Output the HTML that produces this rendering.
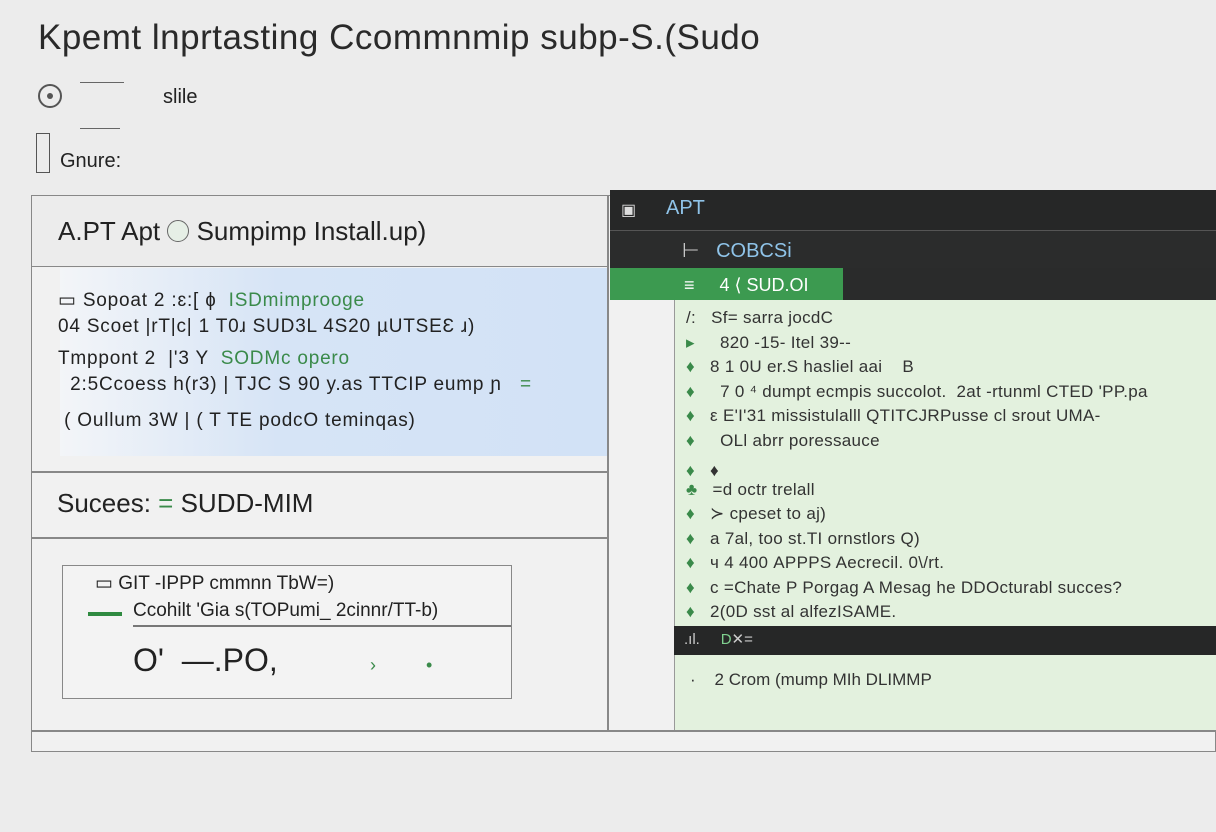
<!DOCTYPE html><html><head><style>
body{margin:0;width:1216px;height:832px;background:#ececec;font-family:"Liberation Sans",sans-serif;position:relative;overflow:hidden;color:#222}
.a{position:absolute;white-space:nowrap}
.g{color:#3a8a4a}
</style></head><body>
<div class="a" style="left:38px;top:18px;font-size:35px;color:#2a2a2a;letter-spacing:0.5px">Kpemt lnprtasting Ccommnmip subp-S.(Sudo</div>
<div class="a" style="left:38px;top:84px;width:24px;height:24px;border:2px solid #555;border-radius:50%;box-sizing:border-box"></div>
<div class="a" style="left:47px;top:93px;width:6px;height:6px;background:#555;border-radius:50%"></div>
<div class="a" style="left:80px;top:82px;width:44px;height:1px;background:#666"></div>
<div class="a" style="left:80px;top:128px;width:40px;height:1px;background:#666"></div>
<div class="a" style="left:163px;top:86px;font-size:20px">slile</div>
<div class="a" style="left:36px;top:133px;width:14px;height:40px;border:1.5px solid #555;box-sizing:border-box"></div>
<div class="a" style="left:60px;top:150px;font-size:20px">Gnure:</div>

<div class="a" style="left:31px;top:195px;width:1185px;height:557px;background:#f1f1f1;border:1.5px solid #888;box-sizing:border-box"></div>
<div class="a" style="left:32px;top:196px;width:575px;height:70px;background:#ececec;border-bottom:1.5px solid #888"></div>
<div class="a" style="left:58px;top:216px;font-size:26px">A.PT Apt <span style="display:inline-block;width:20px;height:20px;border:1.5px solid #666;border-radius:50%;vertical-align:-2px;background:#e6efe6"></span> Sumpimp Install.up)</div>
<div class="a" style="left:60px;top:268px;width:547px;height:188px;background:linear-gradient(90deg,#f3f5f8 0%,#d6e4f6 40%,#d2e2f6 100%)"></div>
<div class="a" style="left:58px;top:288px;font-size:19px;line-height:26px;letter-spacing:0.8px">
<div>&#9645; Sopoat 2 :ɛ:[ ɸ &nbsp;<span class="g">ISDmimprooge</span></div>
<div>04 Scoet |rT|c| 1 T0ɹ SUD3L 4S20 µUTSEƐ ɹ)</div>
<div style="margin-top:6px">Tmppont 2 &nbsp;|'3 Y &nbsp;<span class="g">SODMc opero</span></div>
<div>&nbsp;&nbsp;2:5Ccoess h(r3) | TJC S 90 y.as TTCIP eump ɲ &nbsp; <span class="g">=</span></div>
<div style="margin-top:10px">&nbsp;( Oullum 3W | ( T TE podcO teminqas)</div></div>
<div class="a" style="left:32px;top:471px;width:575px;height:1.5px;background:#888"></div>
<div class="a" style="left:57px;top:488px;font-size:26px">Sucees: <span class="g">=</span> SUDD-MIM</div>
<div class="a" style="left:32px;top:537px;width:575px;height:1.5px;background:#888"></div>
<div class="a" style="left:62px;top:565px;width:450px;height:134px;border:1.5px solid #888;box-sizing:border-box;background:#f3f3f3"></div>
<div class="a" style="left:95px;top:572px;font-size:19px">&#9645; GIT -IPPP cmmnn TbW=)</div>
<div class="a" style="left:88px;top:612px;width:34px;height:4px;background:#2f8a40"></div>
<div class="a" style="left:133px;top:600px;font-size:19px">Ccohilt 'Gia s(TOPumi_ 2cinnr/TT-b)</div>
<div class="a" style="left:133px;top:625px;width:378px;height:1.5px;background:#777"></div>
<div class="a" style="left:133px;top:642px;font-size:32px">O' &nbsp;—.PO,</div>
<div class="a g" style="left:370px;top:655px;font-size:18px">›&nbsp;&nbsp;&nbsp;&nbsp;&nbsp;&nbsp;&nbsp;&nbsp;&nbsp;&nbsp;•</div>
<div class="a" style="left:607px;top:196px;width:1.5px;height:535px;background:#888"></div>
<div class="a" style="left:32px;top:730px;width:1184px;height:1.5px;background:#888"></div>

<div class="a" style="left:610px;top:190px;width:606px;height:40px;background:#262727"></div>
<div class="a" style="left:610px;top:230px;width:606px;height:38px;background:#2b2c2c;border-top:1px solid #555"></div>
<div class="a" style="left:610px;top:268px;width:606px;height:32px;background:#2a2b2b"></div>
<div class="a" style="left:610px;top:268px;width:233px;height:32px;background:#3c9a50"></div>
<div class="a" style="left:621px;top:200px;font-size:16px;color:#ddd">&#9635;</div>
<div class="a" style="left:666px;top:197px;font-size:20px;color:#8fc3e8">APT</div>
<div class="a" style="left:682px;top:238px;font-size:20px;color:#ccc">&#8866;&nbsp;&nbsp; <span style="color:#8fc3e8">COBCSi</span></div>
<div class="a" style="left:684px;top:275px;font-size:18px;color:#fff">&#8801;&nbsp;&nbsp;&nbsp;&nbsp; 4 ⟨ SUD.OI</div>
<div class="a" style="left:674px;top:300px;width:542px;height:430px;background:#e3f1de;border-left:1.5px solid #999"></div>
<div class="a" style="left:686px;top:306px;font-size:17px;line-height:24.5px;color:#333;letter-spacing:0.3px">
<div>/:&nbsp;&nbsp; Sf= sarra jocdC</div>
<div><span class="g">▸</span>&nbsp;&nbsp;&nbsp;&nbsp; 820 -15- Itel 39--</div>
<div><span class="g">♦</span>&nbsp;&nbsp; 8 1 0U er.S hasliel aai &nbsp;&nbsp; B</div>
<div><span class="g">♦</span>&nbsp;&nbsp;&nbsp;&nbsp; 7 0 ⁴ dumpt ecmpis succolot.&nbsp; 2at -rtunml CTED 'PP.pa</div>
<div><span class="g">♦</span>&nbsp;&nbsp; ε E'I'31 missistulalll QTITCJRPusse cl srout UMA-</div>
<div><span class="g">♦</span>&nbsp;&nbsp;&nbsp;&nbsp; OLl abrr poressauce</div>
<div style="margin-top:6px"><span class="g">♦</span>&nbsp;&nbsp; ♦</div>
<div style="margin-top:-6px"><span class="g">♣</span>&nbsp;&nbsp; =d octr trelall</div>
<div><span class="g">♦</span>&nbsp;&nbsp; ≻ cpeset to aj)</div>
<div><span class="g">♦</span>&nbsp;&nbsp; a 7al, too st.TI ornstlors Q)</div>
<div><span class="g">♦</span>&nbsp;&nbsp; ч 4 400 APPPS Aecrecil. 0\/rt.</div>
<div><span class="g">♦</span>&nbsp;&nbsp; c =Chate P Porgag A Mesag he DDOcturabl succes?</div>
<div><span class="g">♦</span>&nbsp;&nbsp; 2(0D sst al alfezISAME.</div></div>
<div class="a" style="left:674px;top:626px;width:542px;height:29px;background:#262727"></div>
<div class="a" style="left:684px;top:630px;font-size:15px;color:#ccc">.ıl.&nbsp;&nbsp;&nbsp;&nbsp; <span style="color:#7fd08f">D</span>✕=</div>
<div class="a" style="left:690px;top:670px;font-size:17px;color:#333">·&nbsp;&nbsp;&nbsp; 2 Crom (mump MIh DLIMMP</div>
</body></html>
